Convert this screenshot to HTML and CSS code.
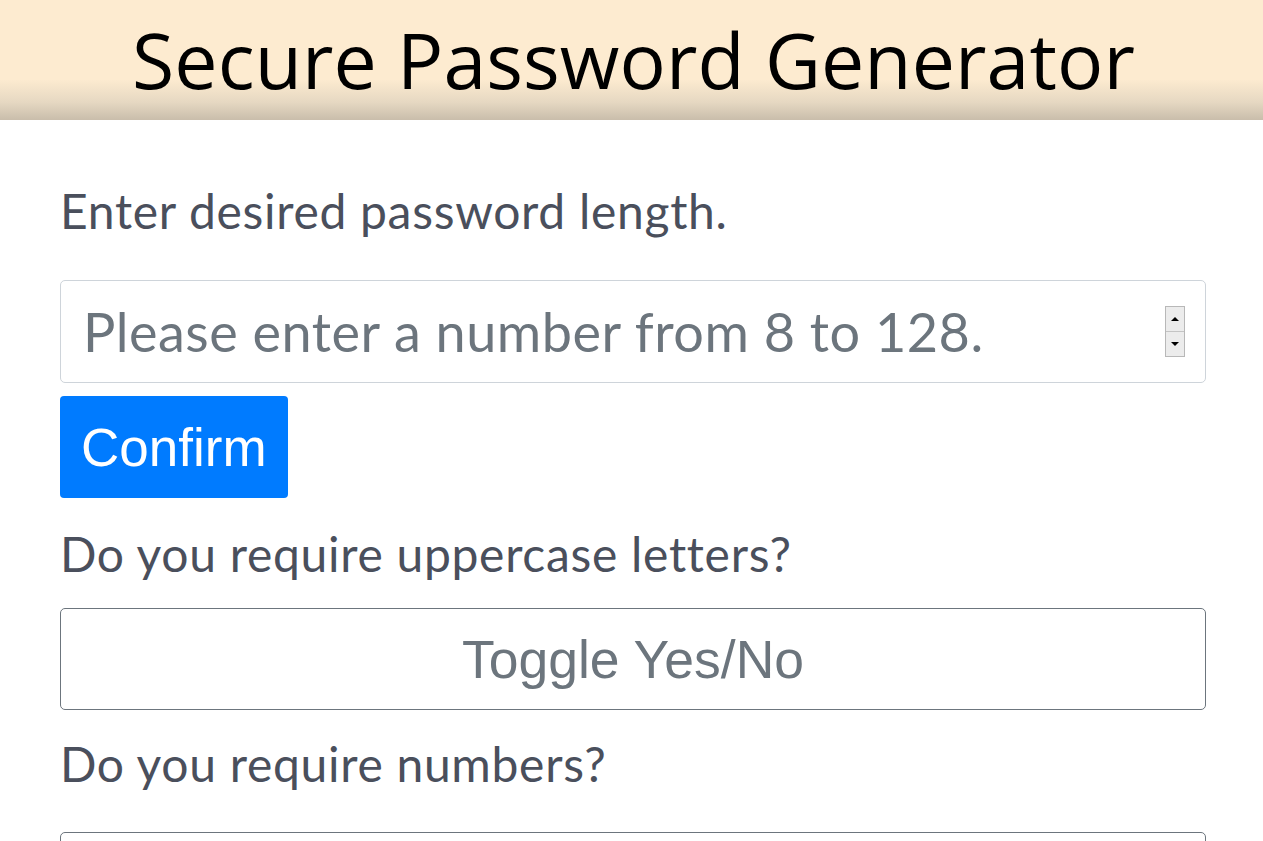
FILE: index.html
```html
<!DOCTYPE html>
<html lang="en">
<head>
<meta charset="utf-8">
<title>Secure Password Generator</title>
<link rel="stylesheet" href="styles.css">
</head>
<body>
<header class="site-header">
  <h1 class="title">Secure Password Generator</h1>
</header>
<main class="content">
  <p class="prompt prompt-first">Enter desired password length.</p>
  <div class="number-field">
    <input class="length-input" type="text" placeholder="Please enter a number from 8 to 128.">
    <span class="spinner" aria-hidden="true">
      <span class="spin spin-up"><span class="tri tri-up"></span></span>
      <span class="spin spin-down"><span class="tri tri-down"></span></span>
    </span>
  </div>
  <button class="btn-confirm" type="button">Confirm</button>
  <p class="prompt">Do you require uppercase letters?</p>
  <button class="btn-toggle" type="button">Toggle Yes/No</button>
  <p class="prompt prompt-last">Do you require numbers?</p>
  <button class="btn-toggle" type="button">Toggle Yes/No</button>
</main>
</body>
</html>
```
FILE: styles.css
```css
* { box-sizing: border-box; }
html, body { margin: 0; padding: 0; }
body {
  background: #ffffff;
  font-family: "Lato", "Open Sans", sans-serif;
  overflow: hidden;
}
.site-header {
  height: 120px;
  background: linear-gradient(to bottom, #fdebd0 0%, #fdebd0 66%, #e6d8c2 85%, #c9bdab 100%);
  display: flex;
  align-items: center;
  justify-content: center;
}
.title {
  margin: 0 0 0 4px;
  font-family: "Open Sans", "Lato", sans-serif;
  font-weight: 400;
  font-size: 77px;
  letter-spacing: 0.1px;
  line-height: 120px;
  color: #000;
}
.content {
  width: 1146px;
  margin: 0 0 0 60px;
  display: flex;
  flex-direction: column;
  align-items: flex-start;
}
.prompt {
  margin: 20px 0 18px;
  font-family: "Lato", sans-serif;
  font-size: 48px;
  line-height: 72px;
  letter-spacing: 0.7px;
  color: #4a4f5c;
}
.prompt-first { margin: 55px 0 33px; }
.prompt-last { margin: 18px 0 32px; }
.number-field {
  position: relative;
  width: 100%;
}
.length-input {
  display: block;
  width: 100%;
  height: 103px;
  padding: 0 22px;
  border: 1px solid #ced4da;
  border-radius: 5px;
  font-family: "Lato", sans-serif;
  font-size: 54px;
  letter-spacing: 0.5px;
  color: #495057;
  background: #fff;
  outline: none;
}
.length-input::placeholder { color: #6c757d; }
.spinner {
  position: absolute;
  right: 21px;
  top: 26px;
  width: 20px;
  height: 51px;
  display: flex;
  flex-direction: column;
  border: 1px solid #b8b8b8;
  background: #ececec;
}
.spin {
  flex: 1;
  display: flex;
  align-items: center;
  justify-content: center;
}
.spin-up { border-bottom: 1px solid #c4c4c4; }
.tri { width: 0; height: 0; border-left: 4px solid transparent; border-right: 4px solid transparent; }
.tri-up { border-bottom: 4px solid #000; }
.tri-down { border-top: 4px solid #000; }
.btn-confirm {
  margin-top: 13px;
  height: 102px;
  padding: 0 21px;
  border: none;
  border-radius: 4px;
  background: #007bff;
  color: #fff;
  font-family: "Liberation Sans", Arial, sans-serif;
  font-size: 53px;
  cursor: pointer;
}
.btn-toggle {
  width: 100%;
  height: 102px;
  padding: 0;
  border: 1px solid #6c757d;
  border-radius: 5px;
  background: #fff;
  color: #6c757d;
  font-family: "Liberation Sans", Arial, sans-serif;
  font-size: 53.5px;
  cursor: pointer;
}
```
